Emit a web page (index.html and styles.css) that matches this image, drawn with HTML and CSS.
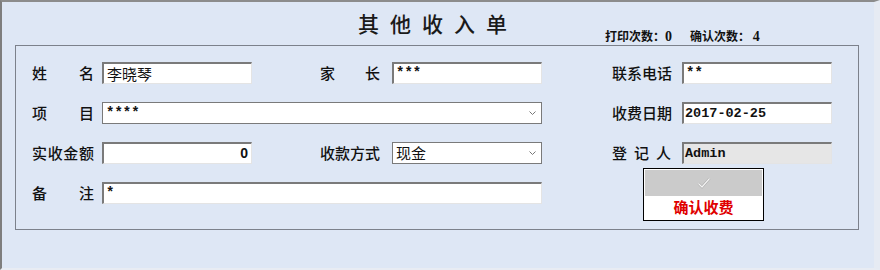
FILE: index.html
```html
<!DOCTYPE html>
<html lang="zh-CN">
<head>
  <meta charset="UTF-8" />
  <meta name="viewport" content="width=device-width, initial-scale=1.0"/>
  <title>其他收入单</title>
  <link rel="stylesheet" href="styles.css">
</head>
<body>
  <div class="window">
    <div class="header">
      <div></div>
      <h1 class="title">其他收入单</h1>
      <div class="counts">
        <span>打印次数：<span class="n">0</span></span>
        <span>确认次数： <span class="n">4</span></span>
      </div>
    </div>

    <div class="group">
      <div class="form">
        <div class="lbl col-a">姓名</div>
        <div class="field col-b">李晓琴</div>
        <div class="lbl col-c">家长</div>
        <div class="field col-d stars">***</div>
        <div class="lbl col-e">联系电话</div>
        <div class="field col-f stars">**</div>

        <div class="lbl col-a">项目</div>
        <div class="field select span-bd stars">
          <span>****</span>
          <svg class="chevron" width="7" height="4" viewBox="0 0 7 4"><polyline points="0.5,0.5 3.5,3.5 6.5,0.5" fill="none" stroke="#777" stroke-width="1"/></svg>
        </div>
        <div class="lbl col-e">收费日期</div>
        <div class="field col-f mono">2017-02-25</div>

        <div class="lbl col-a">实收金额</div>
        <div class="field col-b strong num">0</div>
        <div class="lbl col-c">收款方式</div>
        <div class="field select col-d">
          <span>现金</span>
          <svg class="chevron" width="7" height="4" viewBox="0 0 7 4"><polyline points="0.5,0.5 3.5,3.5 6.5,0.5" fill="none" stroke="#777" stroke-width="1"/></svg>
        </div>
        <div class="lbl col-e">登记人</div>
        <div class="field col-f mono readonly">Admin</div>

        <div class="lbl col-a">备注</div>
        <div class="field span-bd stars">*</div>
        <div class="confirm span-ef">
          <div class="confirm-icon">
            <svg width="14" height="12" viewBox="0 0 14 12">
              <polyline points="1.5,6.5 5,10 12.5,1.5" fill="none" stroke="#a8a8a8" stroke-width="2.4"/>
              <polyline points="1.5,6.5 5,10 12.5,1.5" fill="none" stroke="#f4f4f4" stroke-width="1.2"/>
            </svg>
          </div>
          <div class="confirm-text">确认收费</div>
        </div>
      </div>
    </div>
  </div>
</body>
</html>
```

FILE: styles.css
```css
body {
  margin: 0;
  padding: 0;
  font-family: "Noto Sans CJK SC", sans-serif;
  color: #111;
}
.window {
  width: 880px;
  height: 270px;
  box-sizing: border-box;
  background-color: #dee7f5;
  border-top: 2px solid #8c8c8c;
  border-left: 2px solid #7e7e7e;
  border-right: 6px solid #e6ebf3;
  border-bottom: 2px solid #e8ecf3;
}
.header {
  display: grid;
  grid-template-columns: 1fr auto 1fr;
  height: 43px;
  box-sizing: border-box;
  padding-top: 9px;
}
.title {
  margin: 0;
  font-size: 21px;
  font-weight: 500;
  line-height: 24px;
  letter-spacing: 11px;
  color: #1a1a1a;
}
.counts {
  display: flex;
  gap: 18px;
  margin: 18px 0 0 87px;
  font-family: "Noto Sans CJK SC", sans-serif;
  font-size: 12px;
  font-weight: bold;
  line-height: 14px;
  white-space: nowrap;
}
.counts .n {
  font-family: "Liberation Serif", serif;
  font-size: 14px;
}
.group {
  margin: 0 15px 0 13px;
  border: 1px solid #7c818b;
  padding: 16px 16px 25px 16px;
}
.form {
  display: grid;
  grid-template-columns: 70px 150px 68px 72px 150px 70px 70px 150px;
  grid-auto-rows: 22px;
  row-gap: 18px;
}
.lbl {
  font-size: 15px;
  font-weight: 500;
  line-height: 22px;
  text-align-last: justify;
  white-space: nowrap;
}
.col-a { grid-column: 1; width: 62px; }
.col-b { grid-column: 2; }
.col-c { grid-column: 4; width: 60px; }
.col-d { grid-column: 5; }
.col-e { grid-column: 7; width: 59px; }
.col-f { grid-column: 8; }
.span-bd { grid-column: 2 / 6; }
.span-ef { grid-column: 7 / 9; }
.field {
  box-sizing: border-box;
  height: 22px;
  background-color: #fff;
  border-top: 2px solid #7a7a7a;
  border-left: 2px solid #7a7a7a;
  border-right: 1px solid #e4e4e4;
  border-bottom: 1px solid #e4e4e4;
  padding: 0 3px;
  font-size: 15px;
  line-height: 19px;
  white-space: nowrap;
  overflow: hidden;
}
.strong {
  font-family: "Liberation Sans", "Noto Sans CJK SC", sans-serif;
  font-weight: bold;
  font-size: 14px;
}
.stars {
  font-family: "Liberation Mono", monospace;
  font-weight: bold;
  font-size: 14px;
  padding-left: 2px;
}
.num {
  text-align: right;
}
.mono {
  font-family: "Liberation Mono", monospace;
  font-weight: bold;
  font-size: 13.5px;
  padding-left: 1px;
}
.readonly {
  background-color: #e6e6e6;
}
.select {
  display: flex;
  align-items: center;
  justify-content: space-between;
  border: 1px solid #7a7a7a;
  padding: 0 5px 0 3px;
  line-height: 20px;
}
.chevron {
  display: block;
}
.confirm {
  box-sizing: border-box;
  width: 121px;
  height: 53px;
  margin: -14px 0 0 31px;
  border: 1px solid #000;
  background-color: #fff;
  padding: 1px;
}
.confirm-icon {
  height: 26px;
  background-color: #cbcbcb;
  display: flex;
  align-items: center;
  justify-content: center;
}
.confirm-text {
  text-align: center;
  color: #e00000;
  font-size: 15px;
  font-weight: bold;
  line-height: 22px;
}
```
